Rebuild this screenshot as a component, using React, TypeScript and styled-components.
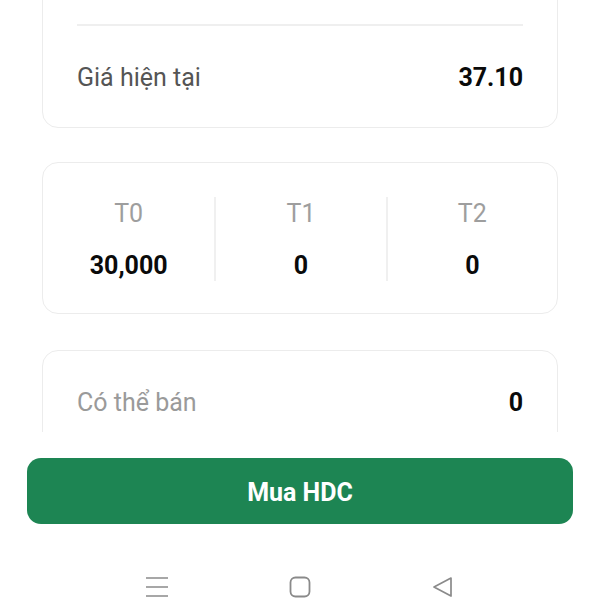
import React from "react";
import styled, { createGlobalStyle } from "styled-components";

const GlobalStyle = createGlobalStyle`
  html, body {
    margin: 0;
    padding: 0;
    background: #ffffff;
  }
  body {
    font-family: Roboto, "Noto Sans", "Liberation Sans", sans-serif;
  }
`;

const Page = styled.div`
  width: 600px;
  height: 600px;
  display: flex;
  flex-direction: column;
  background: #ffffff;
  overflow: hidden;
`;

const Scroll = styled.div`
  height: 432px;
  overflow: hidden;
  padding: 0 42px 0 42px;
`;

const ScrollInner = styled.div`
  margin-top: -40px;
  display: flex;
  flex-direction: column;
  gap: 34px;
`;

const Card = styled.div`
  background: #ffffff;
  border: 1px solid #ececec;
  border-radius: 16px;
`;

const InfoCard = styled(Card)<{ $spaced?: boolean }>`
  padding: 0 34px;
  margin-top: ${(p) => (p.$spaced ? "2px" : "0")};
`;

const Divider = styled.div`
  height: 2px;
  background: #efefef;
`;

const TopSpace = styled.div`
  height: 63px;
`;

const Row = styled.div`
  box-sizing: border-box;
  height: 101px;
  padding-top: 2px;
  display: flex;
  align-items: center;
  justify-content: space-between;
`;

const Label = styled.span<{ $muted?: boolean }>`
  font-size: 25px;
  color: ${(p) => (p.$muted ? "#9a9a9a" : "#555555")};
`;

const Value = styled.span`
  font-size: 25px;
  font-weight: 700;
  color: #0a0a0a;
`;

const TCard = styled(Card)`
  display: grid;
  grid-template-columns: 1fr 1fr 1fr;
  padding: 34px 0 32px;
`;

const TCol = styled.div<{ $first?: boolean }>`
  height: 84px;
  display: flex;
  flex-direction: column;
  align-items: center;
  border-left: ${(p) => (p.$first ? "none" : "2px solid #f0f0f0")};
`;

const TLabel = styled.span`
  font-size: 25px;
  color: #9e9e9e;
  line-height: 34px;
`;

const TValue = styled.span`
  margin-top: 18px;
  font-size: 25px;
  font-weight: 700;
  color: #0a0a0a;
  line-height: 34px;
`;

const Footer = styled.div`
  padding: 26px 27px 0;
  height: 108px;
  box-sizing: border-box;
  background: #ffffff;
`;

const BuyButton = styled.button`
  width: 100%;
  height: 66px;
  padding: 2px 0 0;
  border: none;
  border-radius: 14px;
  background: #1d8553;
  color: #ffffff;
  font-family: inherit;
  font-size: 25px;
  font-weight: 700;
  cursor: pointer;
`;

const NavBar = styled.div`
  flex: 1;
  display: flex;
  align-items: center;
  justify-content: space-between;
  padding: 34px 145px 0 145px;
  color: #8a8a8a;
`;

const NavIcon = styled.svg`
  width: 24px;
  height: 24px;
`;

const tRows = [
  { label: "T0", value: "30,000" },
  { label: "T1", value: "0" },
  { label: "T2", value: "0" },
];

export default function App() {
  return (
    <Page>
      <GlobalStyle />
      <Scroll>
        <ScrollInner>
          <InfoCard>
            <TopSpace />
            <Divider />
            <Row>
              <Label>Giá hiện tại</Label>
              <Value>37.10</Value>
            </Row>
          </InfoCard>
          <TCard>
            {tRows.map((r, i) => (
              <TCol key={r.label} $first={i === 0}>
                <TLabel>{r.label}</TLabel>
                <TValue>{r.value}</TValue>
              </TCol>
            ))}
          </TCard>
          <InfoCard $spaced>
            <Row>
              <Label $muted>Có thể bán</Label>
              <Value>0</Value>
            </Row>
            <Divider />
          </InfoCard>
        </ScrollInner>
      </Scroll>
      <Footer>
        <BuyButton>Mua HDC</BuyButton>
      </Footer>
      <NavBar>
        <NavIcon viewBox="0 0 24 24" fill="none" stroke="currentColor" strokeWidth="1.6">
          <path d="M1 3h22M1 12h22M1 21h22" />
        </NavIcon>
        <NavIcon viewBox="0 0 24 24" fill="none" stroke="currentColor" strokeWidth="1.8">
          <rect x="2.5" y="2.5" width="19" height="19" rx="5" />
        </NavIcon>
        <NavIcon viewBox="0 0 24 24" fill="none" stroke="currentColor" strokeWidth="1.7" strokeLinejoin="round">
          <path d="M20 3L3 12l17 9z" />
        </NavIcon>
      </NavBar>
    </Page>
  );
}
